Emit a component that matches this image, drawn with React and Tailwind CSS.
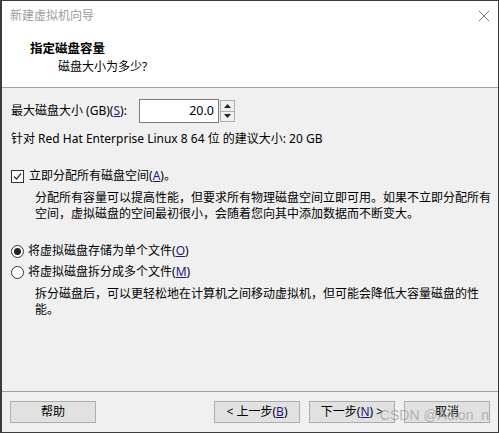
import React from 'react';

const font = { fontFamily: '"Segoe UI", "Noto Sans", "Noto Sans CJK SC", sans-serif' };

const Key = ({ k }) => (
  <>
    (<span className="underline text-[#1a1a80]">{k}</span>)
  </>
);

const Btn = ({ children, w = 'w-[86px]' }) => (
  <button className={`${w} h-[22px] border border-[#adadad] bg-[#e1e1e1] text-[12px] text-black leading-none flex items-center justify-center`}>
    {children}
  </button>
);

const App = () => {
  return (
    <div
      className="w-[499px] h-[433px] bg-[#f0f0f0] border border-[#3c3c3c] border-l-2 flex flex-col text-[12px] text-black relative overflow-hidden"
      style={font}
    >
      {/* header */}
      <div className="bg-white h-[87px] border-b border-[#a0a0a0] flex flex-col">
        <div className="flex items-center justify-between h-[29px] pl-[8px] pr-[8px]">
          <span className="text-[#9b9b9b] text-[12px]">新建虚拟机向导</span>
          <svg width="12" height="12" viewBox="0 0 12 12">
            <path d="M1 1L11 11M11 1L1 11" stroke="#777" strokeWidth="1" />
          </svg>
        </div>
        <div className="pl-[28px] pt-[10px] font-bold text-[12.5px] leading-[18px]">指定磁盘容量</div>
        <div className="pl-[56px] leading-[18px]">磁盘大小为多少?</div>
      </div>

      {/* body */}
      <div className="flex-1 flex flex-col pl-[9px] pr-[10px]">
        <div className="flex items-center mt-[11px] h-[24px]">
          <span className="w-[128px]">最大磁盘大小 (GB)<Key k="S" />:</span>
          <div className="flex items-center h-[24px] w-[80px] border border-[#7a7a7a] bg-white justify-end pr-[4px]">
            <span className="text-[12.5px]">20.0</span>
          </div>
          <div className="flex flex-col h-[22px] w-[15px] ml-[1px] border border-[#adadad] bg-[#f0f0f0]">
            <div className="flex-1 flex items-center justify-center border-b border-[#adadad]">
              <svg width="7" height="4" viewBox="0 0 7 4"><path d="M0 4L3.5 0L7 4Z" fill="#222" /></svg>
            </div>
            <div className="flex-1 flex items-center justify-center">
              <svg width="7" height="4" viewBox="0 0 7 4"><path d="M0 0L3.5 4L7 0Z" fill="#222" /></svg>
            </div>
          </div>
        </div>
        <div className="mt-[7px] leading-[18px]">针对 Red Hat Enterprise Linux 8 64 位 的建议大小: 20 GB</div>

        <div className="flex items-center mt-[19px] leading-[18px]">
          <div className="w-[13px] h-[13px] border border-[#333] bg-white flex items-center justify-center mr-[5px]">
            <svg width="9" height="9" viewBox="0 0 9 9"><path d="M1 4.5L3.5 7L8 1.5" stroke="#333" strokeWidth="1.2" fill="none" /></svg>
          </div>
          <span>立即分配所有磁盘空间<Key k="A" />。</span>
        </div>
        <div className="pl-[24px] mt-[5px] leading-[16px] whitespace-nowrap">
          分配所有容量可以提高性能，但要求所有物理磁盘空间立即可用。如果不立即分配所有
          <br />
          空间，虚拟磁盘的空间最初很小，会随着您向其中添加数据而不断变大。
        </div>

        <div className="flex items-center mt-[20px] leading-[18px]">
          <div className="w-[13px] h-[13px] rounded-full border border-[#333] bg-white flex items-center justify-center mr-[4px]">
            <div className="w-[7px] h-[7px] rounded-full bg-[#222]" />
          </div>
          <span>将虚拟磁盘存储为单个文件<Key k="O" /></span>
        </div>
        <div className="flex items-center mt-[3px] leading-[18px]">
          <div className="w-[13px] h-[13px] rounded-full border border-[#333] bg-white mr-[4px]" />
          <span>将虚拟磁盘拆分成多个文件<Key k="M" /></span>
        </div>
        <div className="pl-[24px] mt-[5px] leading-[16px] whitespace-nowrap">
          拆分磁盘后，可以更轻松地在计算机之间移动虚拟机，但可能会降低大容量磁盘的性
          <br />
          能。
        </div>
      </div>

      {/* footer */}
      <div className="border-t border-[#a0a0a0] h-[41px] flex items-center pl-[8px] pr-[8px]">
        <Btn>帮助</Btn>
        <div className="flex-1" />
        <div className="flex gap-[9px]">
          <Btn>&lt; 上一步<Key k="B" /></Btn>
          <Btn>下一步<Key k="N" /> &gt;</Btn>
          <Btn>取消</Btn>
        </div>
      </div>

      <span className="absolute right-[9px] bottom-[6px] text-[14px] text-[#999]/70 pointer-events-none" style={{ fontFamily: '"Liberation Sans", sans-serif' }}>
        CSDN @Adion_n
      </span>
    </div>
  );
};

export default App;
